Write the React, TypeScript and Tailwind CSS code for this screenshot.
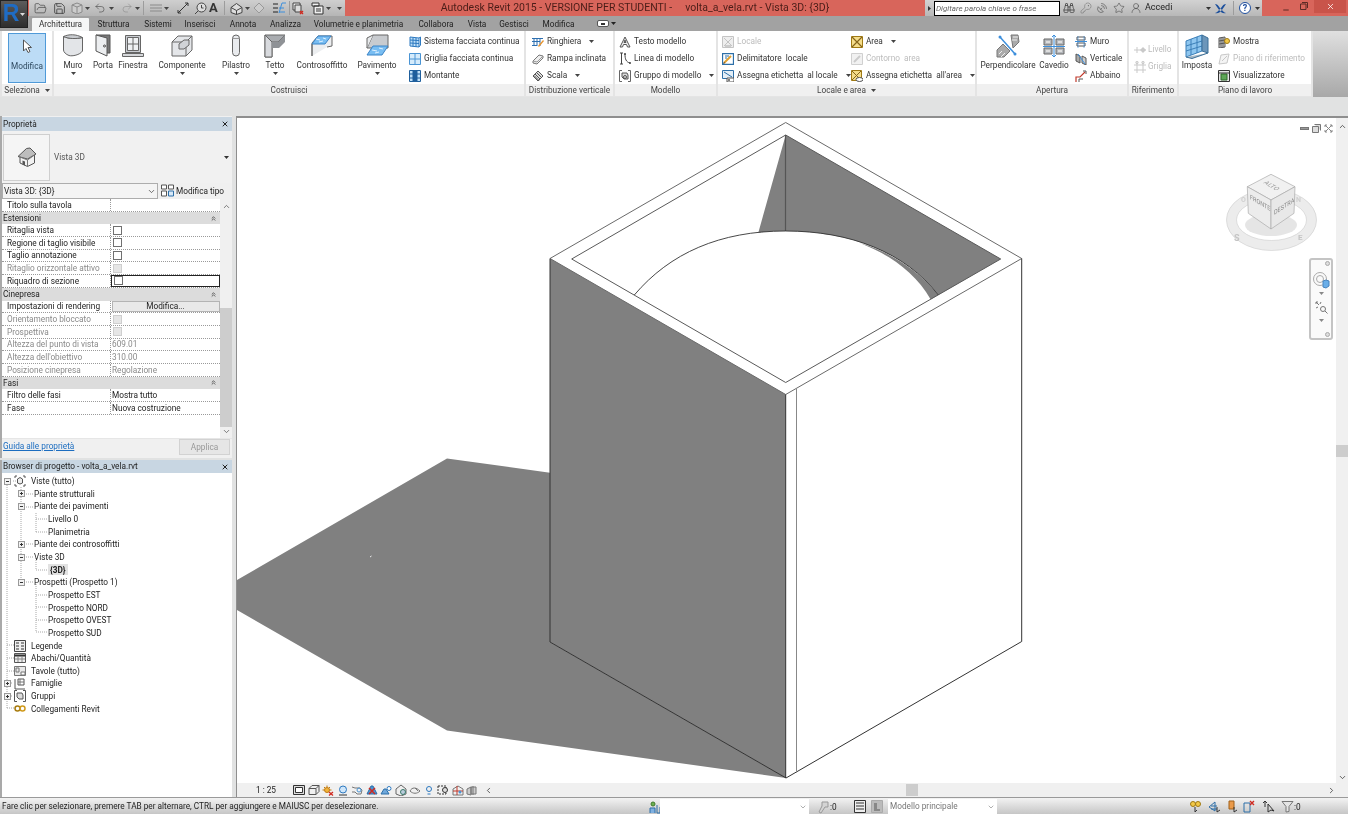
import React from 'react';
import { FolderOpen, Save, Undo2, Redo2, Binoculars, KeyRound, SatelliteDish, Star, UserRound, ChevronDown, ChevronUp, ChevronLeft, ChevronRight, ChevronsUp, X, Minus } from 'lucide-react';

type SP = { w?: number; h?: number; children?: React.ReactNode; className?: string };
const S = ({ w = 12, h = 12, children, className }: SP) => (
  <svg width={w} height={h} viewBox={`0 0 ${w} ${h}`} className={`shrink-0 ${className ?? ''}`} fill="none" strokeWidth="1">{children}</svg>
);
const Caret = ({ c = '#444' }: { c?: string }) => <svg width="5" height="3" viewBox="0 0 5 3" className="shrink-0"><path d="M0 0h5L2.500 3z" fill={c} /></svg>;

const G = '#666';
const BL = '#3d8fdc';

/* ---------- large ribbon icons ---------- */
const Li: Record<string, React.ReactNode> = {
  muro: <S w={22} h={24}><path d="M1.500 2.500C7 5 14 5 20.500 3.500V17C18 21 10 22.500 7 21.500 4 20.500 1.500 18 1.500 16Z" fill="#e3e5e8" stroke={G} /><path d="M1.500 2.500C7 0 14 0 20.500 3.500 14 5 7 5 1.500 2.500Z" fill="#c9ccd0" stroke={G} /></S>,
  porta: <S w={16} h={23}><path d="M1 1h14v18h-3" fill="#777" stroke="#555" /><path d="M1 1l11 3v18L1 17Z" fill="#eceef0" stroke="#555" /><circle cx="9.500" cy="12" r="1" fill="#fff" stroke="#444" /></S>,
  finestra: <S w={22} h={23}><path d="M3.500 1.500h15v17h-15Z" fill="#c9ccd1" stroke={G} /><path d="M5.500 3.500h11v13h-11ZM11 3.500v13M5.500 10h11" fill="#eff1f3" stroke={G} /><path d="M.5 19.500h21v3H.5Z" fill="#d5d7da" stroke={G} /></S>,
  comp: <S w={22} h={23}><path d="M1 8l6-6h14v14l-6 6H1Z" fill="#e4e6e9" stroke={G} /><path d="M1 8h14v14M15 8l6-6" stroke={G} /><path d="M8 15l0-5 5-4h5v5l-5 4Z" fill="#d0d3d7" stroke={G} /></S>,
  pilastro: <S w={12} h={23}><rect x="2.500" y="1" width="7" height="21" rx="3.500" fill="#e9ebee" stroke={G} /><path d="M3 4.500h6" stroke="#999" /></S>,
  tetto: <S w={22} h={24}><path d="M1 1h20l-7 7H8v15H1Z" fill="#a9acb0" stroke={G} /><path d="M1 1l7 7M1 23l7-8M14 8l7-7" stroke={G} /><path d="M1 1l7 7v15H1Z" fill="#d8dade" stroke={G} /><path d="M8 8h6l7-7v7l-6 6H8Z" fill="#8f9296" /></S>,
  contro: <S w={24} h={24}><path d="M2 22V9l6-7h14v10l-5 1" fill="#eceef0" stroke={G} /><path d="M8 2l13 0-6 8H2Z" fill="#78bdf2" stroke="#3b84c7" /><path d="M6 5l4 1M13 4l3 1M9 8l4-1" stroke="#dff1ff" /><path d="M2 22V10" stroke={G} /></S>,
  pav: <S w={24} h={24}><path d="M8 1h15v13H2Z" fill="#c8cbcf" stroke={G} /><path d="M2 14V4l6-3" fill="#e8eaec" stroke={G} /><path d="M8 12h15l-6 9H2Z" fill="#78bdf2" stroke="#3b84c7" /><path d="M7 16l5 1M14 14l4 1M10 19l4-1" stroke="#dff1ff" /></S>,
  perp: <S w={24} h={24}><path d="M15 1h7l1 7-6 6ZM1 16l6-6 7 7-6 6H1Z" fill="#aaa" stroke="#777" /><path d="M17 3l5 0M3 20l3-3M5 23l4-4M16 6l5 0" stroke="#eee" /><path d="M4 3l15 17" stroke={BL} strokeWidth="1.500" /><circle cx="4" cy="3" r="1.500" fill={BL} /><circle cx="19" cy="20" r="1.500" fill={BL} /></S>,
  cavedio: <S w={22} h={24}><path d="M1 5h8v6H1ZM13 5h8v6h-8ZM1 14h8v6H1ZM13 14h8v6h-8Z" fill="#b5b8bc" stroke="#666" /><path d="M3 7h4v2H3ZM15 7h4v2h-4ZM3 16h4v2H3ZM15 16h4v2h-4Z" fill="#ddd" /><path d="M11 1v22M9 3l2-2 2 2M9 21l2 2 2-2M0 12.500h22" stroke={BL} /></S>,
  imposta: <S w={24} h={26}><path d="M1 8l16-6v16L1 24Z" fill="#8ec6ef" stroke="#3b7fb8" /><path d="M6 6v16M12 4v16M1 13l16-5M1 18l16-5" stroke="#3b7fb8" /><path d="M17 2l6 3v15l-6-2Z" fill="#6c96ba" stroke="#3b6f98" /><path d="M1 24l6 1.500 16-5.500" fill="#a7b8c5" stroke="#3b6f98" /></S>,
};

/* ---------- small ribbon icons ---------- */
const Si: Record<string, React.ReactNode> = {
  sis: <S w={12} h={12}><path d="M1 1l9 1v9L1 10Z" fill="#bfe0f8" stroke="#2d79c0" /><path d="M10 2l1.500-1v8L10 11M4 1.500v9M7 2v9M1 4l9 .5M1 7l9 .5" stroke="#2d79c0" /></S>,
  gri: <S w={12} h={12}><path d="M.5.5h11v11H.5ZM6 .5v11M.5 6h11" fill="#d5ebfb" stroke="#4a94d4" /></S>,
  mon: <S w={12} h={12}><path d="M.5.5h11v11H.5Z" fill="#bfe0f8" stroke="#1f5f9c" /><path d="M4 .5h4v11H4ZM.5 4h11M.5 8h11" fill="#1f5f9c" stroke="#1f5f9c" /></S>,
  rin: <S w={12} h={12}><path d="M0 2.500h11M2 3v7M5 3v7M8 3v7" stroke="#2d6fb0" /><path d="M0 5.500h8M0 9.500h5" stroke="#2d6fb0" /><path d="M6 10l5-6 1 1-5 6Z" fill="#e8932c" /></S>,
  ram: <S w={12} h={12}><path d="M1 8l6-6 4 1v2L5 11 1 10Z" fill="#eee" stroke="#777" /><path d="M1 8l4 1 6-6" stroke="#999" /></S>,
  sca: <S w={12} h={12}><path d="M1 6l5-5 5 5-5 5Z" fill="#ddd" stroke="#555" /><path d="M3 4l5 5M4.500 2.500l5 5M2 5.500l5 5" stroke="#555" /></S>,
  tes: <S w={12} h={12}><path d="M1 11L6 1l5 10H8.500L7.500 8.500h-3L3.500 11Z" fill="#eee" stroke="#555" /><path d="M5 6.500h2L6 4Z" fill="#fff" stroke="#555" /></S>,
  lin: <S w={12} h={13}><path d="M2.500 1v11M1 1h3M1 12h3M6 2c0 5 1 8 5 9" stroke="#444" /><circle cx="6" cy="2" r="1" fill="#444" /><circle cx="11" cy="11" r="1" fill="#444" /></S>,
  gru: <S w={12} h={12}><path d="M3 .5H.5v11H3M9 .5h2.500v11H9" stroke="#666" /><path d="M3 3h5l1 2v4H5L3 7Z" fill="#ddd" stroke="#555" /><circle cx="6" cy="7" r="1.500" stroke="#555" /></S>,
  loc: <S w={12} h={12}><path d="M.5.5h11v11H.5Z" fill="#eee" stroke="#c4c4c4" /><path d="M2 2l8 8M10 2l-8 8" stroke="#c4c4c4" /><path d="M3 9h6v2H3Z" fill="#ccc" /></S>,
  del: <S w={12} h={12}><path d="M.5.5h11v11H.5Z" fill="#fff" stroke="#2d6fa8" strokeWidth="1.300" /><path d="M2 10l7-7" stroke="#e0a030" strokeWidth="2" /><path d="M3 3h4M3 5h2" stroke="#2d6fa8" /><path d="M1 11l2-1-1-1Z" fill="#333" /></S>,
  ase: <S w={12} h={12}><path d="M.5.5h11v8H.5Z" fill="#e4eef6" stroke="#2d6fa8" /><path d="M2 2l8 5" stroke="#2d6fa8" /><path d="M5 8h7v4H5Z" fill="#fff" stroke="#555" /><circle cx="7" cy="10" r="1" fill="#555" /></S>,
  are: <S w={12} h={12}><path d="M.5.5h11v11H.5Z" fill="#f5dd8a" stroke="#a07a14" /><path d="M1 1l10 10M11 1L1 11" stroke="#86651a" strokeWidth="1.200" /></S>,
  con: <S w={12} h={12}><path d="M.5.5h11v11H.5Z" fill="#f1f1f1" stroke="#d0d0d0" /><path d="M3 9l6-6" stroke="#cbcbcb" strokeWidth="2" /></S>,
  asa: <S w={12} h={12}><path d="M.5.5h10v10H.5Z" fill="#f5dd8a" stroke="#a07a14" /><path d="M1 1l9 9M10 1l-9 9" stroke="#86651a" /><ellipse cx="8.500" cy="9.500" rx="3.500" ry="2" fill="#fff" stroke="#555" /></S>,
  mur: <S w={12} h={12}><path d="M0 5.500h12" stroke={BL} /><path d="M2 1h8v3H2ZM2 7h8v3H2Z" fill="#fff" stroke="#555" /><path d="M3 0v12M9 0v12" stroke={BL} strokeWidth=".6" /></S>,
  ver: <S w={12} h={12}><path d="M1 1l4 2v7L1 8Z" fill="#aaa" stroke="#555" /><path d="M7 3l4 2v7L7 10Z" fill="#ccc" stroke="#555" /><path d="M3 1l7 10" stroke={BL} /></S>,
  abb: <S w={12} h={12}><path d="M1 12V7h4l5-5" stroke="#c0392b" strokeWidth="1.200" /><path d="M8 1l3 0 0 3" stroke="#555" /><path d="M4 12V9h4" stroke="#555" /></S>,
  liv: <S w={12} h={12}><path d="M0 6h12" stroke="#c9c9c9" /><path d="M6 6l3-3 3 3-3 3Z" fill="#c9c9c9" /><path d="M3 3v6" stroke="#c9c9c9" /></S>,
  grl: <S w={12} h={12}><path d="M0 4h12M0 9h12M3 1v11M9 1v11" stroke="#c9c9c9" /><circle cx="3" cy="1.500" r="1.200" stroke="#c9c9c9" /><circle cx="9" cy="1.500" r="1.200" stroke="#c9c9c9" /></S>,
  mos: <S w={12} h={12}><path d="M1 2l6-1v10l-6 1Z" fill="#ddd" stroke="#555" /><path d="M3 2v9M5 2v9M1 5l6-1M1 8l6-1" stroke="#555" /><circle cx="9" cy="5" r="2.500" fill="#f3c948" stroke="#a07a14" /></S>,
  pia: <S w={12} h={12}><path d="M1 11l2-9 8-1-2 9Z" fill="#f4f4f4" stroke="#c8c8c8" /><path d="M4 8l5-5" stroke="#c8c8c8" /></S>,
  vis: <S w={12} h={12}><path d="M.5.5h11v11H.5Z" fill="#e5e5e5" stroke="#333" /><path d="M3 4h6v6H3Z" fill="#5fa657" stroke="#2e6a2b" /><path d="M1 3h10" stroke="#333" /></S>,
};

const Tab = ({ w, t, active }: { w: number; t: string; active?: boolean }) => (
  <div className={`shrink-0 flex items-center justify-center ${active ? 'h-[13px] mt-[2px] bg-[#f5f6f6] text-[#333] rounded-t-[1px]' : 'h-[15px] pt-[1px] text-[#222]'}`} style={{ width: w }}>{t}</div>
);

const Big = ({ w, ic, t, caret, ml = 0 }: { w: number; ic: string; t: string; caret?: boolean; ml?: number }) => (
  <div className="shrink-0 flex flex-col items-center" style={{ width: w, marginLeft: ml }}>
    <div className="h-[25px] mt-[2px] flex items-center justify-center">{Li[ic]}</div>
    <div className="mt-[1px] leading-[12px] whitespace-nowrap text-[#333]">{t}</div>
    {caret && <div className="mt-[1px]"><Caret /></div>}
  </div>
);

const Sm = ({ ic, t, caret, off, gapT = 3, w }: { ic: string; t: string; caret?: boolean; off?: boolean; gapT?: number; w?: number }) => (
  <div className={`h-[17px] flex items-center whitespace-pre ${off ? 'text-[#bcbcbc]' : 'text-[#333]'}`} style={{ gap: gapT, width: w }}>
    {Si[ic]}<span>{t}</span>{caret && <span className="ml-[5px]"><Caret /></span>}
  </div>
);

const Panel = ({ w, title, children, caret }: { w: number; title: string; children?: React.ReactNode; caret?: boolean }) => (
  <div className="shrink-0 flex flex-col" style={{ width: w }}>
    <div className="h-[53px] bg-white flex relative">{children}</div>
    <div className="h-[12px] bg-[#f0f0f0] flex items-center justify-center gap-[5px] text-[#444] leading-none whitespace-nowrap">{title}{caret && <Caret />}</div>
  </div>
);

const Ribbon = () => (
  <div className="h-[66px] bg-[#e4e4e4] flex gap-[2px] pl-[2px] shrink-0">
    <Panel w={50} title="Seleziona" caret>
      <div className="ml-[6px] mt-[2px] w-[38px] h-[50px] bg-[#bcdcf6] border border-[#4f9ad8] flex flex-col items-center">
        <S w={10} h={17} className="mt-[5px]"><path d="M1.500 1v11l2.500-2.500 2 4 2-1-2-4h3.500Z" fill="#fff" stroke="#555" /></S>
        <div className="mt-[4px] text-[#2f4a60]">Modifica</div>
      </div>
    </Panel>
    <Panel w={470} title="Costruisci">
      <Big w={30} ic="muro" t="Muro" caret ml={4} />
      <Big w={30} ic="porta" t="Porta" />
      <Big w={30} ic="finestra" t="Finestra" />
      <Big w={60} ic="comp" t="Componente" caret ml={4} />
      <Big w={40} ic="pilastro" t="Pilastro" caret ml={4} />
      <Big w={38} ic="tetto" t="Tetto" caret />
      <Big w={54} ic="contro" t="Controsoffitto" ml={1} />
      <Big w={46} ic="pav" t="Pavimento" caret ml={5} />
      <div className="ml-[9px] mt-[2px] flex flex-col">
        <Sm ic="sis" t="Sistema facciata continua" />
        <Sm ic="gri" t="Griglia facciata continua" />
        <Sm ic="mon" t="Montante" />
      </div>
    </Panel>
    <Panel w={87} title="Distribuzione verticale">
      <div className="ml-[6px] mt-[2px] flex flex-col">
        <Sm ic="rin" t="Ringhiera" caret gapT={3} />
        <Sm ic="ram" t="Rampa inclinata" gapT={3} />
        <Sm ic="sca" t="Scala" caret gapT={3} />
      </div>
    </Panel>
    <Panel w={101} title="Modello">
      <div className="ml-[4px] mt-[2px] flex flex-col">
        <Sm ic="tes" t="Testo modello" gapT={3} />
        <Sm ic="lin" t="Linea di modello" gapT={3} />
        <Sm ic="gru" t="Gruppo di modello" caret gapT={3} />
      </div>
    </Panel>
    <Panel w={257} title="Locale e area" caret>
      <div className="ml-[4px] mt-[2px] w-[130px] flex flex-col">
        <Sm ic="loc" t="Locale" off />
        <Sm ic="del" t="Delimitatore  locale" />
        <Sm ic="ase" t="Assegna etichetta  al locale" caret />
      </div>
      <div className="mt-[2px] flex flex-col">
        <Sm ic="are" t="Area" caret />
        <Sm ic="con" t="Contorno  area" off />
        <Sm ic="asa" t="Assegna etichetta  all'area" caret />
      </div>
    </Panel>
    <Panel w={150} title="Apertura">
      <Big w={58} ic="perp" t="Perpendicolare" ml={2} />
      <Big w={32} ic="cavedio" t="Cavedio" ml={1} />
      <div className="ml-[5px] mt-[2px] flex flex-col">
        <Sm ic="mur" t="Muro" />
        <Sm ic="ver" t="Verticale" />
        <Sm ic="abb" t="Abbaino" />
      </div>
    </Panel>
    <Panel w={48} title="Riferimento">
      <div className="ml-[5px] mt-[10px] flex flex-col">
        <Sm ic="liv" t="Livello" off gapT={2} />
        <Sm ic="grl" t="Griglia" off gapT={2} />
      </div>
    </Panel>
    <Panel w={132} title="Piano di lavoro">
      <Big w={36} ic="imposta" t="Imposta" />
      <div className="ml-[3px] mt-[2px] flex flex-col">
        <Sm ic="mos" t="Mostra" />
        <Sm ic="pia" t="Piano di riferimento" off />
        <Sm ic="vis" t="Visualizzatore" />
      </div>
    </Panel>
    <div className="flex-1 bg-gradient-to-b from-[#e0e0e0] to-[#a8a8a8]" />
  </div>
);

const Sep = () => <div className="w-px h-[14px] bg-[#9c9c9c] shrink-0" />;

const Qat = () => (
  <div className="w-[316px] h-[16px] ml-[29px] bg-gradient-to-b from-[#cfcfcf] to-[#b5b5b5] flex items-center shrink-0 pl-[4px] text-[#444]">
    <FolderOpen size={13} strokeWidth={1.300} className="ml-[1px]" />
    <Save size={13} strokeWidth={1.600} className="ml-[6px]" />
    <S w={12} h={12} className="ml-[5px]"><path d="M1 3l5-2 5 2v7l-5 2-5-2Z" fill="#ccc" stroke="#8a8a8a" /><path d="M1 3l5 2 5-2M6 5v7" stroke="#8a8a8a" /></S>
    <span className="ml-[2px]"><Caret /></span>
    <Undo2 size={12} strokeWidth={1.200} className="ml-[4px]" />
    <span className="ml-[3px]"><Caret /></span>
    <Redo2 size={12} strokeWidth={1.200} color="#8d8d8d" className="ml-[7px]" />
    <span className="ml-[2px]"><Caret /></span>
    <span className="ml-[3px]"><Sep /></span>
    <S w={12} h={8} className="ml-[6px]"><path d="M0 1h12M0 4h12M0 7h12" stroke="#8a8a8a" /></S>
    <span className="ml-[2px]"><Caret /></span>
    <S w={12} h={12} className="ml-[8px]"><path d="M1 11L11 1M8 1h3v3M1 8v3h3" stroke="#333" /></S>
    <S w={13} h={13} className="ml-[5px]"><circle cx="7.500" cy="5.500" r="4.500" fill="#ddd" stroke="#444" /><path d="M4 9l-3 3M7.500 3v3h2" stroke="#444" /></S>
    <span className="ml-[2px] h-[16px] text-[13px] leading-[16px] font-bold text-[#333]">A</span>
    <span className="ml-[6px]"><Sep /></span>
    <S w={13} h={13} className="ml-[5px]"><path d="M1 5.500l5.500-4 5.500 4v5l-5.500 2-5.500-2Z" fill="#ddd" stroke="#444" /><path d="M1 5.500l5.500 3 5.500-3M6.500 8.500v4" stroke="#444" /></S>
    <span className="ml-[2px]"><Caret /></span>
    <S w={12} h={12} className="ml-[3px]"><path d="M6 1l5 5-5 5-5-5Z" fill="#ccc" stroke="#999" /></S>
    <S w={13} h={12} className="ml-[8px]"><path d="M0 2h5M0 6h5M0 10h5" stroke="#222" /><path d="M6 11l3-10h4M6 6h5M6 10h6" stroke={BL} /></S>
    <span className="ml-[3px]"><Sep /></span>
    <S w={12} h={13} className="ml-[2px]"><path d="M1 1h7v7H1Z" fill="#eee" stroke="#444" /><path d="M3 3h6v7H3Z" fill="#ddd" stroke="#444" /><path d="M8 9l3 3M11 9l-3 3" stroke="#d02a20" strokeWidth="1.400" /></S>
    <S w={13} h={13} className="ml-[7px]"><path d="M1 1h7v3H1ZM3 4h9v8H3Z" fill="#f0f0f0" stroke="#333" /><path d="M5 7h5M5 9h5" stroke="#333" /></S>
    <span className="ml-[2px]"><Caret /></span>
    <span className="ml-[6px]"><Caret /></span>
  </div>
);

const RightTools = () => (
  <div className="w-[337px] h-[16px] bg-gradient-to-b from-[#d2d2d2] to-[#b8b8b8] flex items-center shrink-0 text-[#333]">
    <div className="w-[9px] flex justify-center"><svg width="3" height="5" viewBox="0 0 3 5"><path d="M0 0l3 2.500L0 5z" fill="#333" /></svg></div>
    <div className="w-[126px] h-[15px] bg-white border border-black italic text-[8px] leading-[13px] pl-[1px] text-[#666] whitespace-nowrap">Digitare parola chiave o frase</div>
    <Binoculars size={12} strokeWidth={1.400} className="ml-[3px]" />
    <KeyRound size={12} strokeWidth={1.000} className="ml-[5px]" color="#666" />
    <SatelliteDish size={12} strokeWidth={1.000} className="ml-[4px]" />
    <Star size={12} strokeWidth={1.000} className="ml-[5px]" />
    <UserRound size={12} strokeWidth={1.000} className="ml-[5px]" />
    <span className="ml-[3px] w-[59px] shrink-0 text-[#222] text-[9px]">Accedi</span>
    <span className="ml-[2px]"><Caret c="#333" /></span>
    <S w={13} h={11} className="ml-[3px]"><path d="M1 1c3 0 4 3 5.500 4.500S10 10 12 10c-3 1-5-1-6-2S3 4 1 1ZM12 1C9 1 8 4 6.500 5.500S3 10 1 10c3 1 5-1 6-2s3-4 5-7Z" fill="#1b4f9c" /></S>
    <span className="ml-[6px]"><Sep /></span>
    <span className="ml-[5px] w-[12px] h-[12px] rounded-full border border-[#1f4f9e] bg-white text-[#1f4f9e] text-[9px] leading-[10px] text-center font-bold">?</span>
    <span className="ml-[4px]"><Caret c="#333" /></span>
  </div>
);

const TitleBar = () => (
  <div className="h-[16px] flex bg-[#d8655b] shrink-0">
    <Qat />
    <div className="w-[580px] h-[16px] flex items-center justify-center text-[#4a1d18] text-[10.500px] whitespace-pre">Autodesk Revit 2015 - VERSIONE PER STUDENTI -     volta_a_vela.rvt - Vista 3D: {'{3D}'}</div>
    <RightTools />
    <div className="flex-1 flex items-start justify-end">
      <div className="w-[16px] flex justify-center mt-[6px]"><Minus size={8} strokeWidth={3} color="#5a2a25" /></div>
      <div className="w-[20px] flex justify-center mt-[2px]"><svg width="8" height="8" viewBox="0 0 8 8"><path d="M2 .5h5.500V6M.5 2h5.500v5.500H.5Z" fill="none" stroke="#5a2a25" /></svg></div>
      <div className="w-[32px] h-[13px] mr-[2px] bg-[#c9544a] flex items-center justify-center"><X size={9} strokeWidth={2} color="#fff" /></div>
    </div>
  </div>
);

const TabsRow = () => (
  <div className="h-[15px] bg-[#a2a2a2] flex shrink-0 pl-[32px] items-start">
    <Tab w={57} t="Architettura" active />
    <Tab w={49} t="Struttura" />
    <Tab w={40} t="Sistemi" />
    <Tab w={44} t="Inserisci" />
    <Tab w={42} t="Annota" />
    <Tab w={43} t="Analizza" />
    <Tab w={103} t="Volumetrie e planimetria" />
    <Tab w={52} t="Collabora" />
    <Tab w={30} t="Vista" />
    <Tab w={44} t="Gestisci" />
    <Tab w={45} t="Modifica" />
    <div className="ml-[16px] mt-[4px] flex items-center gap-[2px]">
      <span className="w-[12px] h-[7px] bg-white border border-[#555] rounded-[2px] flex items-center justify-center"><span className="w-[4px] h-[2px] bg-[#333]" /></span><Caret c="#222" />
    </div>
  </div>
);

/* ---------- properties ---------- */
const RowShell = ({ label, off, children }: { label: string; off?: boolean; children?: React.ReactNode }) => (
  <div className="h-[12.700px] flex border-b border-dotted border-[#9a9a9a] leading-none">
    <div className={`w-[109px] shrink-0 pl-[5px] flex items-center whitespace-nowrap border-r border-dotted border-[#9a9a9a] ${off ? 'text-[#8a8a8a]' : 'text-[#222]'}`}>{label}</div>
    <div className="flex-1 relative flex items-center min-w-0">{children}</div>
  </div>
);
const Cat = ({ t }: { t: string }) => (
  <div className="h-[12.700px] bg-[#dcdcdc] flex items-center justify-between pl-[1px] pr-[3px] text-[#222] leading-none">
    <span>{t}</span><ChevronsUp size={7} strokeWidth={2.500} color="#333" />
  </div>
);
const Check = ({ off }: { off?: boolean }) => <span className={`ml-[2px] w-[9px] h-[9px] border ${off ? 'border-[#cfcfcf] bg-[#e6e6e6]' : 'border-[#707070] bg-white'}`} />;
const Val = ({ t, off }: { t: string; off?: boolean }) => <span className={`pl-[1px] whitespace-nowrap ${off ? 'text-[#8a8a8a]' : 'text-[#222]'}`}>{t}</span>;

const Props = () => (
  <div className="h-[342px] flex flex-col border-l-2 border-[#a9a9a9] bg-[#f0f0f0] shrink-0">
    <div className="h-[14px] bg-[#c8d6e2] flex items-center justify-between pr-[3px] pl-[1px] text-[#222] shrink-0 leading-none mt-[1px]">
      <span>Proprietà</span><X size={8} strokeWidth={3} color="#222" />
    </div>
    <div className="h-[52px] flex items-center pl-[1px] pr-[3px] shrink-0 bg-[#f1f1f1]">
      <div className="w-[47px] h-[47px] border border-[#cfcfcf] bg-[#f5f5f5] flex items-center justify-center">
        <svg width="22" height="22" viewBox="0 0 22 22" fill="none"><path d="M4 10v7l7.500 3.500L18.500 17v-8" fill="#f2f2f2" stroke="#555" /><path d="M2 10.500L10.500 2.500l3.500-.5 6 6-8.500 5Z" fill="#bdbdbd" stroke="#555" /><path d="M4 11l7.500 3v6.500M11.500 14l7-5" stroke="#777" /><path d="M6.500 14.500v4l2.500 1.100v-4.100Z" fill="#555" /></svg>
      </div>
      <span className="ml-[4px] text-[#555]">Vista 3D</span>
      <span className="ml-auto"><Caret c="#333" /></span>
    </div>
    <div className="h-[16px] flex items-start shrink-0">
      <div className="w-[156px] h-[16px] border border-[#adadad] bg-[#f4f4f4] flex items-center justify-between px-[1px] text-[#222]"><span>Vista 3D: {'{3D}'}</span><ChevronDown size={9} strokeWidth={2} color="#444" /></div>
      <S w={13} h={13} className="ml-[3px] mt-[1px]"><path d="M.5 1h5v4h-5ZM7.500 1h5v4h-5ZM.5 7h5v5h-5Z" fill="#fff" stroke="#555" /><path d="M7.500 7h5v5h-5Z" fill="#d7e8f7" stroke="#2d6fa8" /></S>
      <span className="ml-[2px] h-[16px] flex items-center text-[#222] whitespace-nowrap">Modifica tipo</span>
    </div>
    <div className="flex-1 flex min-h-0 bg-white">
      <div className="w-[218px] shrink-0 flex flex-col">
        <RowShell label="Titolo sulla tavola" />
        <Cat t="Estensioni" />
        <RowShell label="Ritaglia vista"><Check /></RowShell>
        <RowShell label="Regione di taglio visibile"><Check /></RowShell>
        <RowShell label="Taglio annotazione"><Check /></RowShell>
        <RowShell label="Ritaglio orizzontale attivo" off><Check off /></RowShell>
        <RowShell label="Riquadro di sezione"><div className="absolute inset-0 border border-[#222] flex items-center"><Check /></div></RowShell>
        <Cat t="Cinepresa" />
        <RowShell label="Impostazioni di rendering"><div className="absolute inset-[0.500px] bg-[#e9e9e9] border border-[#b4b4b4] flex items-center justify-center text-[#222]">Modifica...</div></RowShell>
        <RowShell label="Orientamento bloccato" off><Check off /></RowShell>
        <RowShell label="Prospettiva" off><Check off /></RowShell>
        <RowShell label="Altezza del punto di vista" off><Val t="609.01" off /></RowShell>
        <RowShell label="Altezza dell'obiettivo" off><Val t="310.00" off /></RowShell>
        <RowShell label="Posizione cinepresa" off><Val t="Regolazione" off /></RowShell>
        <Cat t="Fasi" />
        <RowShell label="Filtro delle fasi"><Val t="Mostra tutto" /></RowShell>
        <RowShell label="Fase"><Val t="Nuova costruzione" /></RowShell>
      </div>
      <div className="w-[12px] ml-auto bg-[#f0f0f0] flex flex-col items-center">
        <ChevronUp size={9} strokeWidth={2} color="#555" className="mt-[3px]" />
        <div className="w-full h-[119px] mt-[97px] bg-[#cdcdcd]" />
        <ChevronDown size={9} strokeWidth={2} color="#555" className="mt-auto mb-[2px]" />
      </div>
    </div>
    <div className="h-[20px] flex items-start justify-between pl-[1px] pr-[2px] shrink-0 border-t border-[#e6e6e6]">
      <span className="underline text-[#1c6dc0] h-[14px] flex items-center">Guida alle proprietà</span>
      <span className="w-[51px] h-[16px] bg-[#e6e6e6] border border-[#d2d2d2] text-[#999] flex items-center justify-center">Applica</span>
    </div>
  </div>
);

/* ---------- project browser ---------- */
const Exp = ({ plus }: { plus?: boolean }) => (
  <svg width="7" height="7" viewBox="0 0 7 7" className="shrink-0"><rect x=".5" y=".5" width="6" height="6" fill="#f2f2f2" stroke="#9a9a9a" /><path d={plus ? 'M2 3.500h3M3.500 2v3' : 'M2 3.500h3'} stroke="#333" /></svg>
);
const TreeIc: Record<string, React.ReactNode> = {
  viste: <S w={12} h={12}><path d="M1 3V1h2M9 1h2v2M11 9v2H9M3 11H1V9" stroke="#555" /><path d="M3.500 4l2.500-1.500L8.500 4v4l-2.500 1-2.500-1Z" fill="#eee" stroke="#555" /></S>,
  leg: <S w={12} h={12}><path d="M.5.5h11v11H.5Z" fill="#eee" stroke="#444" /><path d="M2 3h3M2 6h3M2 9h3M7 3h3M7 6h3M7 9h3" stroke="#333" /></S>,
  aba: <S w={12} h={12}><path d="M.5 1.500h11v9H.5Z" fill="#eee" stroke="#555" /><path d="M.5 3.500h11" stroke="#333" strokeWidth="2" /><path d="M4 4v6M8 4v6M1 7h10" stroke="#888" /></S>,
  tav: <S w={12} h={12}><path d="M.5 1.500h11v9H.5Z" fill="#e8e8e8" stroke="#777" /><path d="M7 7h4v3H7Z" fill="#fff" stroke="#777" /><path d="M2 3h3v4H2Z" stroke="#777" /></S>,
  fam: <S w={12} h={12}><path d="M1 1v10h10M4 1h6v6H4Z" stroke="#555" /><path d="M6 1v6M4 4h6" stroke="#777" /></S>,
  gru: <S w={12} h={12}><path d="M3 .5H.5v11H3M9 .5h2.500v11H9" stroke="#555" /><path d="M3 3h5l1 2v4H5L3 7Z" fill="#ddd" stroke="#555" /></S>,
  lnk: <S w={12} h={7}><circle cx="3.500" cy="3.500" r="2.500" stroke="#a87c10" strokeWidth="1.500" /><circle cx="8.500" cy="3.500" r="2.500" stroke="#d09a1c" strokeWidth="1.500" /></S>,
};
const Tr = ({ d, exp, plus, ic, t, sel }: { d: number; exp?: boolean; plus?: boolean; ic?: string; t: string; sel?: boolean }) => (
  <div className="h-[12.650px] flex items-center leading-none whitespace-nowrap text-[#222] relative">
    {d === 0 && (
      <>
        <div className="w-[11px] pl-[2px] shrink-0">{exp && <Exp plus={plus} />}</div>
        <div className="w-[13px] shrink-0 flex justify-end">{ic && TreeIc[ic]}</div>
        <span className="ml-[5px]">{t}</span>
      </>
    )}
    {d === 1 && (
      <>
        <div className="w-[16px] shrink-0" />
        <Exp plus={plus} />
        <span className="ml-[9px]">{t}</span>
      </>
    )}
    {d === 2 && <span className={`ml-[46px] ${sel ? 'font-bold bg-[#e2e2e2] px-[2px] -mx-[1px] h-[11px] flex items-center' : ''}`}>{t}</span>}
  </div>
);

const BrowserLines = () => (
  <svg className="absolute left-0 top-[1px] pointer-events-none" width="50" height="240" viewBox="0 0 50 240" fill="none" stroke="#a8a8a8" strokeDasharray="1 1">
    <path d="M5 7V234M5 7h4M5 171h8M5 184h8M5 197h8M5 234h9M5 209h5M5 222h5" />
    <path d="M19 13V108M11 7h5M24 20h8M24 33h8M24 70h8M24 83h8M24 108h8" />
    <path d="M34 39V58M34 45h11M34 58h11M34 84V96M34 96h11M34 108V158M34 121h11M34 133h11M34 146h11M34 158h11" />
  </svg>
);

const Browser = () => (
  <div className="flex-1 flex flex-col border-l-2 border-[#a9a9a9] min-h-0">
    <div className="h-[13px] bg-[#c8d6e2] flex items-center justify-between pr-[3px] pl-[1px] text-[#222] shrink-0 leading-none">
      <span>Browser di progetto - volta_a_vela.rvt</span><X size={8} strokeWidth={3} color="#222" />
    </div>
    <div className="flex-1 bg-white relative pt-[2px]">
      <BrowserLines />
      <div className="relative flex flex-col">
        <Tr d={0} exp ic="viste" t="Viste (tutto)" />
        <Tr d={1} exp plus t="Piante strutturali" />
        <Tr d={1} exp t="Piante dei pavimenti" />
        <Tr d={2} t="Livello 0" />
        <Tr d={2} t="Planimetria" />
        <Tr d={1} exp plus t="Piante dei controsoffitti" />
        <Tr d={1} exp t="Viste 3D" />
        <Tr d={2} t="{3D}" sel />
        <Tr d={1} exp t="Prospetti (Prospetto 1)" />
        <Tr d={2} t="Prospetto EST" />
        <Tr d={2} t="Prospetto NORD" />
        <Tr d={2} t="Prospetto OVEST" />
        <Tr d={2} t="Prospetto SUD" />
        <Tr d={0} ic="leg" t="Legende" />
        <Tr d={0} ic="aba" t="Abachi/Quantità" />
        <Tr d={0} ic="tav" t="Tavole (tutto)" />
        <Tr d={0} exp plus ic="fam" t="Famiglie" />
        <Tr d={0} exp plus ic="gru" t="Gruppi" />
        <Tr d={0} ic="lnk" t="Collegamenti Revit" />
      </div>
    </div>
  </div>
);

/* ---------- 3D view ---------- */
const Model = () => (
  <svg className="absolute inset-0" width="1099" height="665" viewBox="237 118 1099 665" fill="none">
    <path d="M237 580L447 458.500L550 472.700V642L786 778L447 730.500L237 610Z" fill="#808080" />
    <path d="M370 557l1.500-1" stroke="#eee" />
    <path d="M785.700 135L1000.700 259L938.300 295C910 258 860 232 785.700 231C776 231 767 231.500 758.300 232.700Z" fill="#808080" />
    <path d="M938.300 295L930.700 299.500C915 272 890 255 860 243 890 252 918 270 938.300 295Z" fill="#808080" />
    <path d="M550 258.500L785.700 394.500V778L550 642Z" fill="#808080" />
    <path d="M785.700 122.500L1021.700 258.500L785.700 394.500L550 258.500Z" stroke="#6a6a6a" />
    <path d="M785.700 135L1000.700 259L785.700 382.500L571.700 259Z" stroke="#5a5a5a" />
    <path d="M785.500 135V231" stroke="#555" strokeWidth="1.200" />
    <path d="M634.300 295C670 253 720 231 785.700 231C850 231 905 252 938.300 295" stroke="#333" strokeWidth=".9" />
    <path d="M550 258.500V642L786 778L1021.700 641.500V258.500" stroke="#333" />
    <path d="M785.700 394.500V778" stroke="#333" />
    <path d="M796.500 388.500V772.500" stroke="#888" />
    {/* view cube */}
    <ellipse cx="1271.500" cy="220" rx="40" ry="25.500" stroke="#ececec" strokeWidth="10" />
    <ellipse cx="1271.500" cy="220" rx="45" ry="30.500" stroke="#d2d2d2" strokeWidth=".7" />
    <ellipse cx="1271.500" cy="220" rx="35" ry="20.500" stroke="#d2d2d2" strokeWidth=".7" />
    <ellipse cx="1271" cy="225" rx="26" ry="11" fill="#cfcfcf" opacity=".55" />
    <path d="M1271 174.300L1295 186.700L1271 200L1247.300 186.700Z" fill="#f1f1f1" stroke="#aaa" strokeWidth=".7" />
    <path d="M1247.300 186.700L1271 200V229L1248.300 213.300Z" fill="#ececec" stroke="#aaa" strokeWidth=".7" />
    <path d="M1295 186.700L1271 200V229L1294 213.300Z" fill="#e8e8e8" stroke="#aaa" strokeWidth=".7" />
    <text transform="matrix(.82 .47 -.82 .47 1263 183)" fontSize="7" fill="#999" fontFamily="Roboto, sans-serif">ALTO</text>
    <text transform="matrix(.85 .5 0 1 1250 199)" fontSize="6.500" fill="#888" fontFamily="Roboto, sans-serif">FRONTE</text>
    <text transform="matrix(.85 -.55 0 1 1274 215)" fontSize="6.500" fill="#888" fontFamily="Roboto, sans-serif">DESTRA</text>
    <text x="1234" y="241" fontSize="9" fill="#c4c4c4" fontFamily="Roboto, sans-serif" fontWeight="700">S</text>
    <text x="1298" y="240" fontSize="8" fill="#c4c4c4" fontFamily="Roboto, sans-serif" fontWeight="700">E</text>
    <text x="1241" y="202" fontSize="7" fill="#cfcfcf" fontFamily="Roboto, sans-serif" fontWeight="700">O</text>
    <text x="1296" y="202" fontSize="7" fill="#cfcfcf" fontFamily="Roboto, sans-serif" fontWeight="700">N</text>
  </svg>
);

const ViewCtl = () => (
  <>
    <div className="absolute right-[3px] top-[6px] flex items-center gap-[3px]">
      <span className="w-[9px] h-[3px] bg-[#999] border border-[#777]" />
      <svg width="9" height="9" viewBox="0 0 9 9" fill="none"><path d="M2.500.5h6v6M.5 2.500h6v6h-6Z" fill="#ddd" stroke="#777" /></svg>
      <svg width="9" height="9" viewBox="0 0 9 9" fill="none" stroke="#888"><path d="M1 1l7 7M8 1L1 8M1 3V1h2M6 1h2v2M8 6v2H6M3 8H1V6" /></svg>
    </div>
    <div className="absolute left-[1072px] top-[140px] w-[24px] h-[82px] bg-[#fafafa] border-2 border-[#c4c4c4] rounded-[3px] flex flex-col items-center">
      <span className="self-end mr-[1px] mt-[1px] w-[5px] h-[5px] rounded-full border border-[#aaa] bg-[#ddd]" />
      <svg width="18" height="18" viewBox="0 0 18 18" fill="none" className="mt-[5px]"><circle cx="8" cy="8" r="6.500" stroke="#aaa" /><circle cx="8" cy="8" r="3.500" stroke="#aaa" /><path d="M11 10l3-1 3 1v5l-3 2-3-1Z" fill="#6aaee8" stroke="#4884be" /></svg>
      <span className="mt-[3px]"><Caret c="#888" /></span>
      <svg width="13" height="13" viewBox="0 0 13 13" fill="none" stroke="#777" className="mt-[6px]"><path d="M1 1l3 3M1 1h2M1 1v2M6 1l-1 2M1 7l2-1" /><circle cx="8" cy="8" r="2.500" /><path d="M10 10l2.500 2.500" /></svg>
      <span className="mt-[5px]"><Caret c="#888" /></span>
      <span className="mt-auto mb-[1px] self-end mr-[1px] w-[5px] h-[5px] rounded-full border border-[#aaa] bg-[#ddd]" />
    </div>
  </>
);

const VCI = ({ children, ml = 2.500 }: { children: React.ReactNode; ml?: number }) => <span className="shrink-0 flex" style={{ marginLeft: ml }}>{children}</span>;
const ViewBar = () => (
  <div className="h-[14px] bg-[#f0f0f0] flex items-center shrink-0 text-[#222] leading-none">
    <span className="ml-[19px] w-[37px] shrink-0 whitespace-nowrap">1 : 25</span>
    <VCI ml={0}><S w={12} h={10}><path d="M.5.5h11v9H.5Z" fill="#ddd" stroke="#333" /><path d="M2.500 2.500h7v5h-7Z" fill="#fff" stroke="#333" /></S></VCI>
    <VCI><S w={12} h={10}><path d="M1 3.500h7v6H1ZM1 3.500L4 .5h7v6l-3 3M8 3.500l3-3" stroke="#555" /></S></VCI>
    <VCI><S w={12} h={11}><circle cx="5" cy="5" r="2.500" fill="#f2b33b" stroke="#c07a10" /><path d="M5 .5v1.500M.5 5H2M8 5h1.500M2 2l1 1M8 2L7 3" stroke="#c07a10" /><path d="M7 7l4 3.500M11 7l-4 3.500" stroke="#d02a20" strokeWidth="1.300" /></S></VCI>
    <VCI><S w={12} h={11}><circle cx="6" cy="4.500" r="3.500" fill="#cfe6fa" stroke="#2d79c0" /><path d="M2 10h8" stroke="#333" /></S></VCI>
    <VCI><S w={12} h={11}><path d="M1 2l3 1h5l2 2-1 4H6L4 7 1 7" stroke="#777" /><circle cx="8" cy="5" r="2" stroke="#4a94d4" /></S></VCI>
    <VCI><S w={12} h={11}><path d="M1 9l4-8h2l4 8Z" fill="#4a94d4" stroke="#2d6fa8" /><path d="M3 3l6 6M9 3L3 9" stroke="#d02a20" strokeWidth="1.500" /></S></VCI>
    <VCI><S w={12} h={11}><path d="M1 9l3-5h2l3 5Z" fill="#6fa8dc" stroke="#2d6fa8" /><circle cx="9" cy="3.500" r="2" fill="#fff" stroke="#2d79c0" /></S></VCI>
    <VCI><S w={12} h={12}><path d="M1 5l5-4 5 4v5l-5 2-5-2Z" fill="#eee" stroke="#666" /><circle cx="8" cy="8" r="2.500" fill="#bcd" stroke="#3a7a6a" /></S></VCI>
    <VCI><S w={12} h={10}><path d="M1 6c2-4 6-4 10 0-3 3-7 3-10 0Z" stroke="#777" /><path d="M6 3l3 3" stroke="#777" /></S></VCI>
    <VCI ml={3}><S w={10} h={10}><circle cx="5" cy="4" r="2.500" stroke="#2d79c0" /><path d="M3.500 9h3" stroke="#2d79c0" /></S></VCI>
    <VCI ml={3}><S w={12} h={10}><path d="M1 1h8v8H1Z" strokeDasharray="2 1" stroke="#333" /><circle cx="8" cy="5" r="2.500" fill="#ddd" stroke="#333" /></S></VCI>
    <VCI><S w={12} h={11}><path d="M1 4l5-3 5 3v6H1Z" stroke="#777" /><path d="M1 6h10M5 1v9" stroke="#c0392b" /><circle cx="8" cy="7" r="1.500" fill="#4a94d4" /></S></VCI>
    <VCI><S w={12} h={11}><path d="M1 4l4-2v8L1 9ZM5 2h5v7H5Z" fill="#ccc" stroke="#777" /><path d="M7 1v9" stroke="#777" /></S></VCI>
    <ChevronLeft size={9} strokeWidth={2} color="#333" className="ml-[6px]" />
    <div className="flex-1 relative h-full">
      <div className="absolute left-[413px] top-[1px] w-[12px] h-[12px] bg-[#cdcdcd]" />
    </div>
    <ChevronRight size={9} strokeWidth={2} color="#333" className="mr-[12px]" />
  </div>
);

const Canvas = () => (
  <div className="flex-1 flex flex-col border-t-2 border-l border-[#8e8e8e] min-w-0">
    <div className="flex-1 flex min-h-0">
      <div className="flex-1 bg-white relative overflow-hidden">
        <Model />
        <ViewCtl />
      </div>
      <div className="w-[12px] bg-[#f0f0f0] flex flex-col items-center">
        <ChevronUp size={9} strokeWidth={2} color="#333" className="mt-[4px]" />
        <div className="w-full h-[12px] mt-[314px] bg-[#cdcdcd]" />
        <ChevronDown size={9} strokeWidth={2} color="#333" className="mt-auto mb-[1px]" />
      </div>
    </div>
    <ViewBar />
  </div>
);

/* ---------- status bar ---------- */
const Combo = ({ w, t, ml }: { w: number; t?: string; ml: number }) => (
  <div className="h-[15px] bg-white flex items-center justify-between pl-[2px] pr-[2px] text-[#777] shrink-0" style={{ width: w, marginLeft: ml }}>
    <span className="whitespace-nowrap">{t}</span><ChevronDown size={8} strokeWidth={2} color="#888" />
  </div>
);
const Status = () => (
  <div className="h-[17px] flex items-end border-t border-[#9a9a9a] bg-gradient-to-b from-[#f3f3f3] to-[#c6c6c6] shrink-0 text-[#222] leading-none">
    <div className="h-[16px] pl-[2px] flex items-center w-[648px] shrink-0 whitespace-nowrap">Fare clic per selezionare, premere TAB per alternare, CTRL per aggiungere e MAIUSC per deselezionare.</div>
    <S w={12} h={13}><circle cx="5" cy="3" r="2" fill="#6bb04f" stroke="#3f7a2c" /><path d="M2 12V7h5v5" fill="#7fb0e0" stroke="#2d6fa8" /><path d="M9 4v8h3V6" stroke="#2d6fa8" /></S>
    <Combo w={149} ml={0} />
    <S w={12} h={13} className="ml-[8px]"><path d="M5 1h6v5H8L4 12 2 11l3-6Z" fill="#d4d4d4" stroke="#999" /></S>
    <span className="ml-[1px] w-[8px] mb-[3px]">:0</span>
    <S w={12} h={13} className="ml-[16px] mb-[1px]"><path d="M.5.5h11v12H.5Z" fill="#eee" stroke="#333" /><path d="M2 3h8M2 6h8M2 9h8" stroke="#333" /></S>
    <S w={12} h={13} className="ml-[5px] mb-[1px]"><path d="M.5.5h11v12H.5Z" fill="#bbb" stroke="#aaa" /><path d="M3 3h3v6h3v2H3Z" fill="#888" /></S>
    <Combo w={109} ml={5} t="Modello principale" />
    <S w={13} h={13} className="ml-[192px] mb-[1px]"><circle cx="4" cy="4" r="2.500" fill="#f3c948" stroke="#a07a14" /><circle cx="9" cy="4" r="2.500" fill="#f3c948" stroke="#a07a14" /><path d="M6 7v5l2-2" stroke="#333" /></S>
    <S w={13} h={13} className="ml-[6px] mb-[1px]"><path d="M1 7l6-5v9Z" stroke="#2d6fa8" /><path d="M3 6h6M3 9h6" stroke="#2d6fa8" /><path d="M9 7v5l3-2" stroke="#333" /></S>
    <S w={13} h={13} className="ml-[5px] mb-[1px]"><path d="M3 1h5v8H3Z" fill="#ea9a4a" stroke="#a0601a" /><path d="M8 7v5l3-2" stroke="#333" /></S>
    <S w={13} h={13} className="ml-[4px] mb-[1px]"><path d="M1 3h6v9H1Z" stroke="#2d6fa8" /><path d="M7 1l4 4M11 1L7 5" stroke="#d02a20" strokeWidth="1.400" /></S>
    <S w={13} h={13} className="ml-[6px] mb-[1px]"><path d="M3 1v6M1 3l2-2 2 2M6 4v8l3-2 3 1Z" stroke="#333" /></S>
    <S w={13} h={13} className="ml-[6px] mb-[1px]"><path d="M1 1.500h11L8 6.500v5L5 12V6.500Z" fill="#e5e5e5" stroke="#777" /></S>
    <span className="mb-[3px]">:0</span>
  </div>
);

export default function App() {
  return (
    <div className="w-[1348px] h-[814px] relative overflow-hidden flex flex-col bg-[#e1e2e2] font-['Roboto',sans-serif] text-[8.250px] blur-[0.3px]">
      <div className="absolute left-0 top-0 w-[28px] h-[28px] bg-gradient-to-b from-[#5c5c5c] to-[#2e2e2e] border border-[#222] flex items-center justify-center z-10">
        <span className="text-[23px] leading-none font-bold text-[#1f6cc4] font-['Liberation_Sans',sans-serif] -mt-[2px] -ml-[6px]">R</span>
        <span className="absolute right-[2px] bottom-[11px]"><Caret c="#ddd" /></span>
      </div>
      <TitleBar />
      <TabsRow />
      <Ribbon />
      <div className="h-[19px] shrink-0" />
      <div className="flex-1 flex min-h-0">
        <div className="w-[232px] shrink-0 flex flex-col">
          <Props />
          <div className="h-[2px] shrink-0" />
          <Browser />
        </div>
        <div className="w-[4px] shrink-0" />
        <Canvas />
      </div>
      <Status />
    </div>
  );
}
